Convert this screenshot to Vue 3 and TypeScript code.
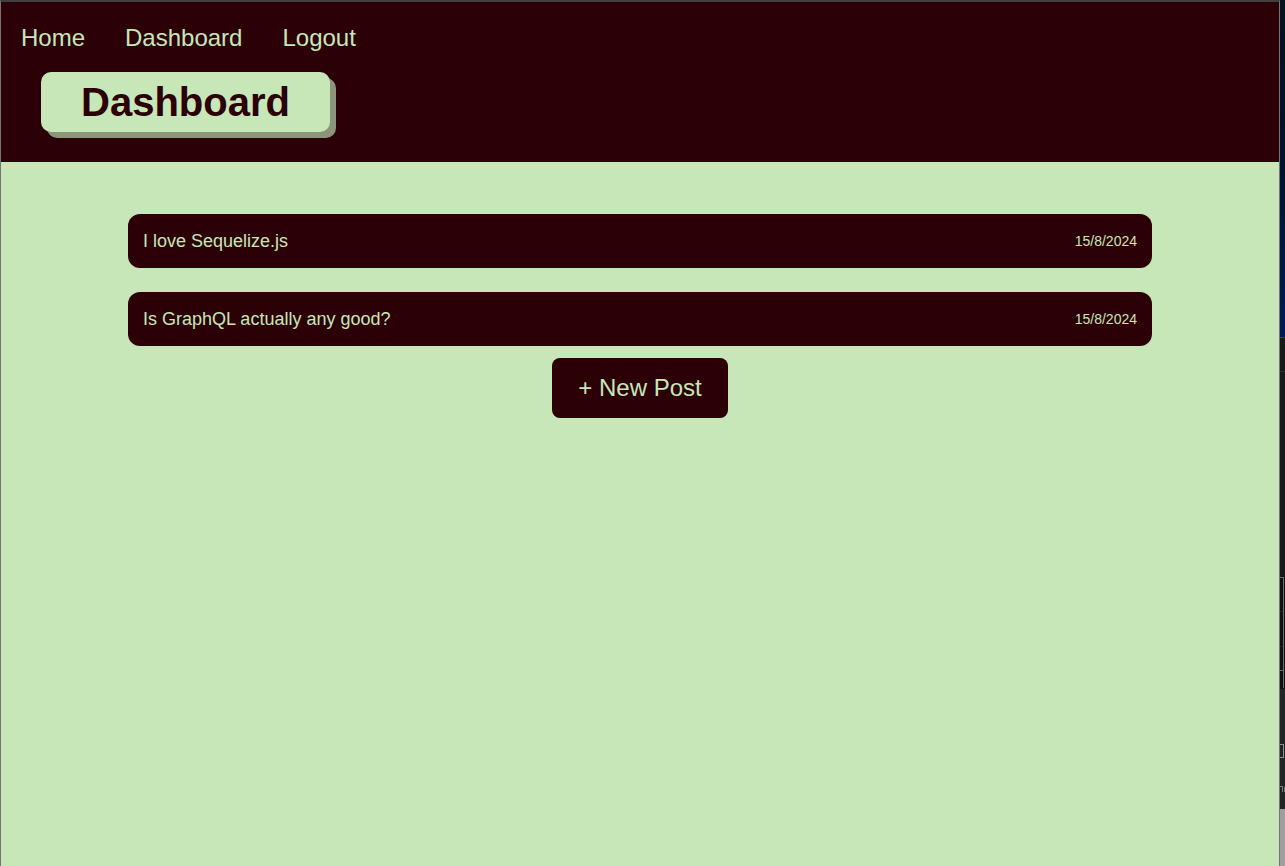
<script setup lang="ts">
interface Post {
  id: number
  title: string
  date: string
}

const links: string[] = ['Home', 'Dashboard', 'Logout']

const posts: Post[] = [
  { id: 1, title: 'I love Sequelize.js', date: '15/8/2024' },
  { id: 2, title: 'Is GraphQL actually any good?', date: '15/8/2024' },
]
</script>

<template>
  <div class="desktop">
    <div class="window">
      <header class="header">
        <nav class="nav">
          <a v-for="link in links" :key="link" href="#">{{ link }}</a>
        </nav>
        <h1 class="title">Dashboard</h1>
      </header>
      <main class="main">
        <ul class="posts">
          <li v-for="post in posts" :key="post.id">
            <a class="post" href="#">
              <span>{{ post.title }}</span>
              <time class="date">{{ post.date }}</time>
            </a>
          </li>
        </ul>
        <button class="new-post" type="button">+ New Post</button>
      </main>
    </div>
    <div class="backdrop" aria-hidden="true">
      <svg width="5" height="866" viewBox="0 0 5 866" shape-rendering="crispEdges">
        <defs>
          <linearGradient id="sky" x1="0" y1="0" x2="0" y2="1">
            <stop offset="0" stop-color="#02141c" />
            <stop offset="0.5" stop-color="#001230" />
            <stop offset="1" stop-color="#001a58" />
          </linearGradient>
        </defs>
        <rect width="5" height="337" fill="url(#sky)" />
        <rect y="337" width="5" height="240" fill="#17191a" />
        <rect y="337" width="5" height="1" fill="#3c4046" />
        <rect y="371" width="5" height="1" fill="#2c2f31" />
        <rect y="577" width="5" height="112" fill="#0f1112" />
        <path d="M0 577.5H3.5V688M0 670.5H3.5" fill="none" stroke="#6a6c6e" />
        <path d="M0 611.5H3M0 646.5H3" fill="none" stroke="#202223" />
        <rect y="689" width="5" height="120" fill="#222526" />
        <path d="M0 744.5H3.5V757.5H0" fill="none" stroke="#8c8e90" />
        <path d="M0 786.5H2.5V792M4.5 787V792" fill="none" stroke="#777c80" />
        <rect y="809" width="5" height="57" fill="#a09fa0" />
      </svg>
    </div>
  </div>
</template>

<style>
body {
  margin: 0;
  background: #17191a;
}
</style>

<style scoped>
.desktop {
  display: flex;
  min-height: 100vh;
  font-family: "Liberation Sans", Arial, sans-serif;
  color: #c8e7b8;
}

.window {
  flex: 1;
  display: flex;
  flex-direction: column;
  box-sizing: border-box;
  border: 1px solid #747474;
  border-top: 2px solid #404040;
  border-bottom: 0;
  background: #c8e7b8;
}

.backdrop {
  width: 5px;
  overflow: hidden;
}

.backdrop svg {
  display: block;
}

.header {
  display: flex;
  flex-direction: column;
  align-items: flex-start;
  gap: 20px;
  padding: 22px 20px 30px;
  background: #2b0107;
}

.nav {
  display: flex;
  gap: 40px;
  font-size: 24px;
  line-height: 28px;
}

a {
  color: inherit;
  text-decoration: none;
}

.title {
  margin: 0 20px;
  padding: 0 40px;
  border-radius: 10px;
  background: #c8e7b8;
  box-shadow: 6px 6px 0 #8c947a;
  color: #2b0107;
  font-size: 40px;
  line-height: 60px;
}

.main {
  flex: 1;
  display: flex;
  flex-direction: column;
  align-items: center;
  gap: 12px;
  padding-top: 52px;
}

.posts {
  display: flex;
  flex-direction: column;
  gap: 24px;
  box-sizing: border-box;
  width: 100%;
  margin: 0;
  padding: 0 127px;
  list-style: none;
}

.post {
  display: flex;
  align-items: center;
  justify-content: space-between;
  padding: 15px;
  border-radius: 12px;
  background: #2b0107;
  font-size: 18px;
  line-height: 24px;
}

.date {
  font-size: 14px;
}

.new-post {
  padding: 0 26px;
  border: 0;
  border-radius: 8px;
  background: #2b0107;
  color: #c8e7b8;
  font-family: inherit;
  font-size: 24px;
  line-height: 60px;
  cursor: pointer;
}
</style>
